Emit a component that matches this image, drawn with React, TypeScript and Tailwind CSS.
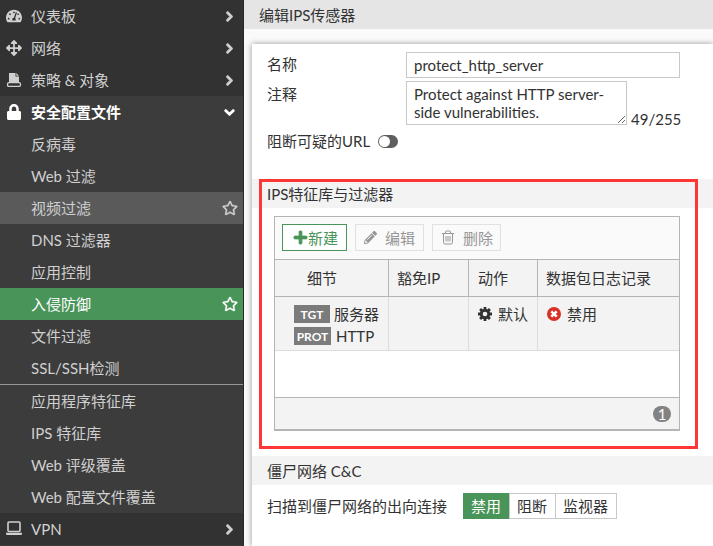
import { useState } from "react";
import {
  FaArrowsAlt,
  FaChevronDown,
  FaChevronRight,
  FaLock,
  FaPencilAlt,
  FaPlus,
  FaRegStar,
  FaTachometerAlt,
} from "react-icons/fa";

interface SubItem {
  label: string;
  hover?: boolean;
  active?: boolean;
}

const securityItems: SubItem[] = [
  { label: "反病毒" },
  { label: "Web 过滤" },
  { label: "视频过滤", hover: true },
  { label: "DNS 过滤器" },
  { label: "应用控制" },
  { label: "入侵防御", active: true },
  { label: "文件过滤" },
  { label: "SSL/SSH检测" },
];

const signatureItems: SubItem[] = [
  { label: "应用程序特征库" },
  { label: "IPS 特征库" },
  { label: "Web 评级覆盖" },
  { label: "Web 配置文件覆盖" },
];

const scanModes = ["禁用", "阻断", "监视器"];

function PolicyIcon() {
  return (
    <svg width="16" height="16" viewBox="0 0 16 16" fill="currentColor">
      <path d="M3 1h6.500v3.500H13V10H3z" />
      <path d="M10.300 1L13 3.700h-2.700z" />
      <path
        d="M3 10.700h10q1.500 0 1.500 1.500v.8q0 1.300-1.300 1.300H2.800q-1.300 0-1.300-1.300v-.8q0-1.500 1.500-1.500z"
        fill="none"
        stroke="currentColor"
        strokeWidth="1.300"
      />
    </svg>
  );
}

function LaptopIcon() {
  return (
    <svg width="16" height="16" viewBox="0 0 16 16" fill="currentColor">
      <rect x="2" y="1" width="12" height="9.500" rx="1" fill="none" stroke="currentColor" strokeWidth="1.600" />
      <path d="M0 11.700h16v1a1.300 1.300 0 0 1-1.300 1.300H1.300A1.300 1.300 0 0 1 0 12.700z" />
    </svg>
  );
}

function TrashIcon() {
  return (
    <svg width="14" height="15" viewBox="0 0 14 15" fill="none" stroke="currentColor">
      <path d="M1 3.500h12M4.500 3.500V2q0-1 1-1h3q1 0 1 1v1.500M2.500 3.500V12.500q0 1.500 1.500 1.500h6q1.500 0 1.500-1.500V3.500M5 6v5.500M7 6v5.500M9 6v5.500" />
    </svg>
  );
}

function GearIcon() {
  return (
    <svg width="14" height="14" viewBox="0 0 14 14">
      <g stroke="currentColor" strokeWidth="2.800">
        <path d="M7 0v14M0 7h14M2.100 2.100l9.800 9.800M11.900 2.100l-9.800 9.800" />
      </g>
      <circle cx="7" cy="7" r="5.200" fill="currentColor" />
      <circle cx="7" cy="7" r="2.300" fill="#f3f3f3" />
    </svg>
  );
}

function DisabledIcon() {
  return (
    <svg width="14" height="14" viewBox="0 0 14 14">
      <circle cx="7" cy="7" r="7" fill="#d93025" />
      <path d="M4.300 4.300l5.400 5.400M9.700 4.300l-5.400 5.400" stroke="#fff" strokeWidth="2.600" />
    </svg>
  );
}

function MenuRow({ icon, label, open }: { icon: React.ReactNode; label: string; open?: boolean }) {
  return (
    <button
      className={`flex h-8 w-full items-center pl-1.5 pr-2 text-left ${
        open ? "bg-[#3c3c3c] font-bold text-white" : "bg-[#323232]"
      }`}
    >
      <span className="flex w-4 shrink-0 justify-center">{icon}</span>
      <span className="ml-[9px] flex-1">{label}</span>
      {open ? (
        <FaChevronDown size={11} strokeWidth={50} />
      ) : (
        <FaChevronRight size={11} strokeWidth={50} />
      )}
    </button>
  );
}

function SubLink({ label, hover, active }: SubItem) {
  const look = active ? "bg-[#499459] text-white" : hover ? "bg-[#5a5a5a]" : "";
  return (
    <a href="#" className={`flex h-8 items-center justify-between pl-[31px] pr-[5px] ${look}`}>
      {label}
      {(hover || active) && <FaRegStar size={16} strokeWidth={12} />}
    </a>
  );
}

function Sidebar() {
  return (
    <nav className="w-[244px] shrink-0 border-r border-[#282828] bg-[#3c3c3c] text-[#d0d0d0]">
      <MenuRow icon={<FaTachometerAlt size={16} />} label="仪表板" />
      <MenuRow icon={<FaArrowsAlt size={16} />} label="网络" />
      <MenuRow icon={<PolicyIcon />} label="策略 & 对象" />
      <MenuRow icon={<FaLock size={16} />} label="安全配置文件" open />
      {securityItems.map((item) => (
        <SubLink key={item.label} {...item} />
      ))}
      <div className="border-t border-[#969696]">
        {signatureItems.map((item) => (
          <SubLink key={item.label} {...item} />
        ))}
      </div>
      <MenuRow icon={<LaptopIcon />} label="VPN" />
    </nav>
  );
}

function SensorTable() {
  return (
    <div className="ml-[22px] mr-[33px] mt-2 border border-b-2 border-[#b4b4b4]">
      <div className="flex gap-2 bg-[#fafafa] px-[7px] pb-2 pt-[7px]">
        <button className="flex h-[27px] items-center border border-[#499459] bg-white pl-2.5 pr-2 text-[#499459]">
          <FaPlus size={15} strokeWidth={30} />
          新建
        </button>
        <button disabled className="flex h-[27px] items-center gap-2 border border-[#e1e1e1] px-2 text-[#969696]">
          <FaPencilAlt size={13} />
          编辑
        </button>
        <button disabled className="flex h-[27px] items-center gap-2 border border-[#e1e1e1] pl-2 pr-[7px] text-[#969696]">
          <TrashIcon />
          删除
        </button>
      </div>
      <table className="w-full table-fixed border-separate border-spacing-0 bg-[#f3f3f3] text-left">
        <thead>
          <tr className="h-[38px]">
            <th className="w-[114px] border-y border-r border-[#b4b4b4] pl-8 font-normal">细节</th>
            <th className="w-20 border-y border-r border-[#b4b4b4] pl-2 font-normal">豁免IP</th>
            <th className="w-[69px] border-y border-r border-[#b4b4b4] pl-[9px] font-normal">动作</th>
            <th className="border-y border-[#b4b4b4] pl-2 font-normal">数据包日志记录</th>
          </tr>
        </thead>
        <tbody>
          <tr className="h-[54px] align-top">
            <td className="border-b border-r border-[#dcdcdc] pl-[19px] pt-1.5">
              <div className="flex h-[22px] items-center gap-1">
                <span className="h-[18px] w-9 bg-[#7b7b7b] text-center text-[12px] font-bold leading-[20px] text-white">TGT</span>
                服务器
              </div>
              <div className="flex h-[22px] items-center gap-[5px]">
                <span className="h-[18px] w-[37px] bg-[#7b7b7b] text-center text-[12px] font-bold leading-[20px] text-white">PROT</span>
                HTTP
              </div>
            </td>
            <td className="border-b border-r border-[#dcdcdc]"></td>
            <td className="border-b border-r border-[#dcdcdc] pl-[9px] pt-1.5">
              <div className="flex h-[22px] items-center gap-1.5">
                <GearIcon />
                默认
              </div>
            </td>
            <td className="border-b border-[#dcdcdc] pl-[9px] pt-1.5">
              <div className="flex h-[22px] items-center gap-1.5">
                <DisabledIcon />
                禁用
              </div>
            </td>
          </tr>
        </tbody>
      </table>
      <div className="h-[46px] bg-white" />
      <div className="flex h-8 items-center justify-end border-t border-[#b4b4b4] bg-[#f3f3f3] pr-2">
        <span className="h-4 w-[18px] rounded-full bg-[#828282] text-center leading-4 text-white">1</span>
      </div>
    </div>
  );
}

export default function App() {
  const [name, setName] = useState("protect_http_server");
  const [comment, setComment] = useState("Protect against HTTP server-side vulnerabilities.");
  const [blockUrl, setBlockUrl] = useState(false);
  const [scanMode, setScanMode] = useState("禁用");

  return (
    <div className="flex min-h-screen bg-[#fafafa] font-['Lato','Noto_Sans_CJK_SC',sans-serif] text-[15px] leading-5 text-[#323232]">
      <Sidebar />
      <main className="flex min-w-0 flex-1 flex-col">
        <h1 className="flex h-[29px] items-center bg-[#e5e5e5] pl-[15px]">编辑IPS传感器</h1>
        <div className="ml-2 mt-[15px] flex-1 bg-white shadow-[0_0_6px_rgba(0,0,0,0.4)]">
          <form className="flex flex-col pl-[15px] pt-2">
            <div className="flex">
              <label htmlFor="name" className="w-[139px] pt-0.5">名称</label>
              <input
                id="name"
                type="text"
                value={name}
                onChange={(e) => setName(e.target.value)}
                className="h-[26px] w-[274px] border border-[#c8c8c8] px-[7px]"
              />
            </div>
            <div className="mt-[3px] flex">
              <label htmlFor="comment" className="w-[139px] pt-[3px]">注释</label>
              <textarea
                id="comment"
                maxLength={255}
                value={comment}
                onChange={(e) => setComment(e.target.value)}
                className="h-11 w-[221px] resize overflow-hidden border border-[#c8c8c8] px-[7px] py-[3px] leading-[18px]"
              />
              <span className="ml-1 self-end leading-3">{comment.length}/255</span>
            </div>
            <div className="mt-1.5 flex items-center gap-2">
              <label htmlFor="block-url">阻断可疑的URL</label>
              <input
                id="block-url"
                type="checkbox"
                checked={blockUrl}
                onChange={(e) => setBlockUrl(e.target.checked)}
                className="flex h-[13px] w-5 appearance-none items-center rounded-full bg-[#5f5f5f] px-px before:size-[11px] before:rounded-full before:bg-white checked:justify-end checked:bg-[#499459]"
              />
            </div>
          </form>

          <section className="relative mt-7 pb-[25px]">
            <h2 className="flex h-[29px] items-center bg-[#f3f3f3] pl-[15px]">IPS特征库与过滤器</h2>
            <SensorTable />
            <div className="pointer-events-none absolute bottom-[7px] left-[7px] right-[15px] top-0 border-3 border-[#ff3636]" />
          </section>

          <section>
            <h2 className="flex h-[29px] items-center bg-[#f3f3f3] pl-[15px]">僵尸网络 C&C</h2>
            <div className="flex items-center pl-[15px] pt-2">
              <span id="scan-label" className="w-[196px]">扫描到僵尸网络的出向连接</span>
              <div role="group" aria-labelledby="scan-label" className="flex">
                {scanModes.map((mode) => (
                  <button
                    key={mode}
                    aria-pressed={scanMode === mode}
                    onClick={() => setScanMode(mode)}
                    className={`h-[26px] border-y border-l pl-[7px] pr-2 last:border-r ${
                      scanMode === mode
                        ? "border-[#499459] bg-[#499459] text-white"
                        : "border-[#c8c8c8] bg-white"
                    }`}
                  >
                    {mode}
                  </button>
                ))}
              </div>
            </div>
          </section>
        </div>
      </main>
    </div>
  );
}
